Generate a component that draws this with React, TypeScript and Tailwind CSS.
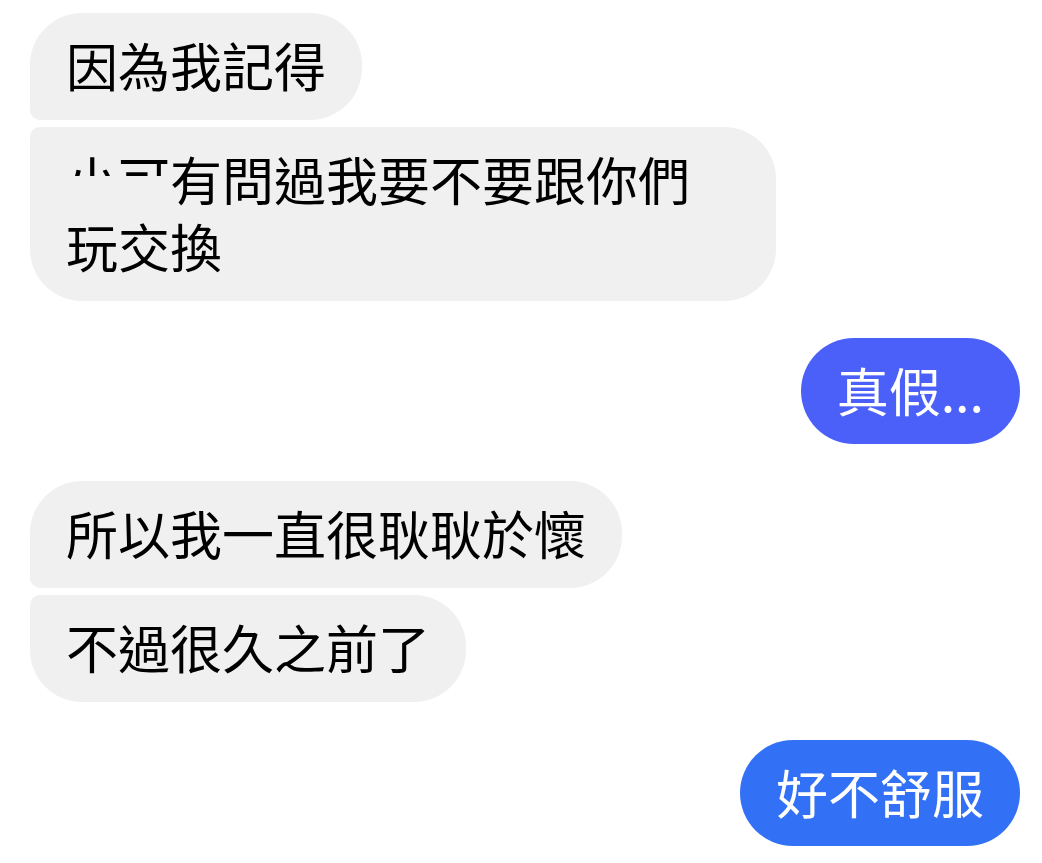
import type { ReactNode } from 'react'

// Gray incoming bubble; corner gets squared where messages are grouped
const Incoming = ({ children, corner }: { children: ReactNode; corner: string }) => (
  <div className="flex justify-start">
    <div
      className={`max-w-[746px] bg-[#f0f0f0] text-black rounded-[52px] ${corner} px-9 pt-[18px] pb-[22px] text-[52px] leading-[67px]`}
    >
      {children}
    </div>
  </div>
)

// Blue outgoing bubble
const Outgoing = ({ children, color }: { children: ReactNode; color: string }) => (
  <div className="flex justify-end">
    <div className={`${color} text-white rounded-full px-9 pt-[18px] pb-[21px] text-[52px] leading-[67px]`}>
      {children}
    </div>
  </div>
)

export default function App() {
  return (
    <div className="min-h-screen bg-white pl-[30px] pr-[22px] pt-[13px] font-['Noto_Sans_CJK_TC','Noto_Sans_CJK_SC',sans-serif]">
      {/* Primer grupo */}
      <div className="flex flex-col gap-[7px]">
        <Incoming corner="rounded-bl-[10px]">因為我記得</Incoming>
        <Incoming corner="rounded-tl-[10px]">
          {/* nombre tapado: solo se ve la parte de arriba */}
          <span className="inline-block [clip-path:inset(0_0_36px_0)]">小可</span>
          有問過我要不要跟你們玩交換
        </Incoming>
      </div>

      <div className="mt-[37px]">
        <Outgoing color="bg-[#4a60f9]">真假...</Outgoing>
      </div>

      <div className="mt-[37px] flex flex-col gap-[7px]">
        <Incoming corner="rounded-bl-[10px]">所以我一直很耿耿於懷</Incoming>
        <Incoming corner="rounded-tl-[10px]">不過很久之前了</Incoming>
      </div>

      <div className="mt-[38px]">
        <Outgoing color="bg-[#3270f6]">好不舒服</Outgoing>
      </div>
    </div>
  )
}
